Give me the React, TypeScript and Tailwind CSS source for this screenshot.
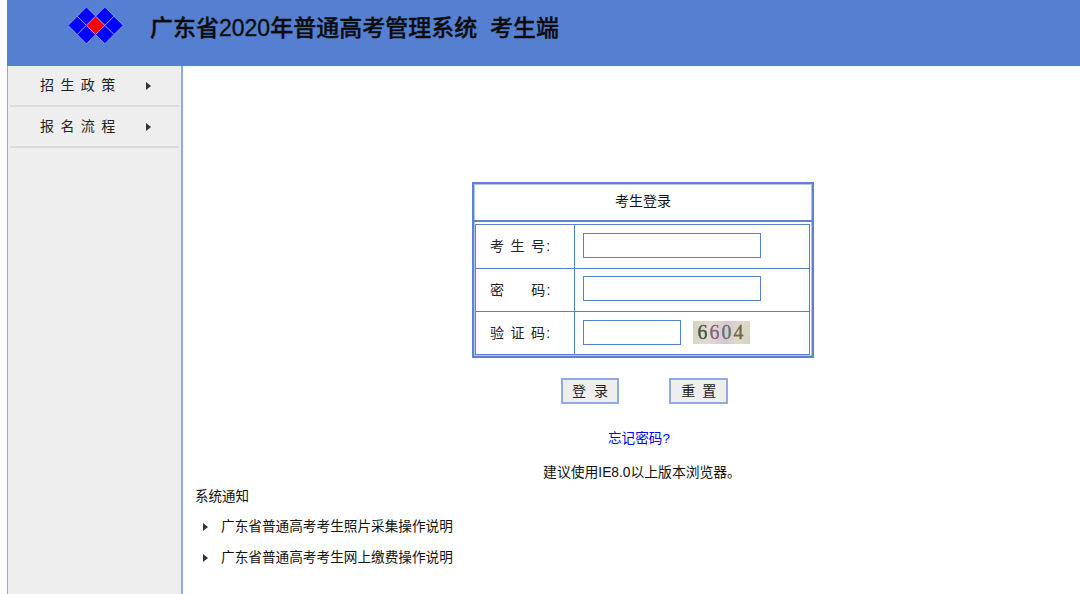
const font = { fontFamily: '"Liberation Sans", "Noto Sans CJK SC", sans-serif' };

function Logo() {
  // touching diamonds on a 9.2px grid, red one in the middle
  const cells = [
    [18.4, 9.2, "#0000ff"],
    [36.8, 9.2, "#0000ff"],
    [9.2, 18.4, "#0000ff"],
    [27.6, 18.4, "#ff0000"],
    [46, 18.4, "#0000ff"],
    [18.4, 27.6, "#0000ff"],
    [36.8, 27.6, "#0000ff"],
  ] as const;
  return (
    <svg width="56" height="38" viewBox="0 0 56 38" className="mt-[7px] shrink-0">
      {cells.map(([x, y, fill]) => (
        <polygon
          key={`${x}-${y}`}
          points={`${x},${y - 9.2} ${x + 9.2},${y} ${x},${y + 9.2} ${x - 9.2},${y}`}
          fill={fill}
          stroke="#9db4ee"
          strokeWidth="0.7"
        />
      ))}
    </svg>
  );
}

function Arrow({ className }: { className?: string }) {
  return (
    <svg width="5" height="8" viewBox="0 0 5 8" className={className}>
      <polygon points="0,0 5,4 0,8" fill="#333333" />
    </svg>
  );
}

function MenuItem({ label }: { label: string }) {
  return (
    <div className="ml-[2px] mr-[2px] flex h-[41px] items-center border-b-2 border-[#dcdcdc] pl-[30px] pr-[28px] text-[14px] tracking-[6.4px] text-[#222222]">
      <span className="flex-1">{label}</span>
      <Arrow />
    </div>
  );
}

function Captcha() {
  return (
    <div className="ml-[12px] flex h-[23px] w-[57px] items-center justify-center bg-[linear-gradient(100deg,#d6d2bf,#e4dccf_30%,#d6c6d4_58%,#e0dbc8_80%,#d5d2c0)] font-['Liberation_Serif',serif] text-[20px] leading-none tracking-[2px] blur-[0.4px] [-webkit-text-stroke:0.4px_currentColor]">
      <span className="text-[#3f5c49]">6</span>
      <span className="text-[#80647f]">6</span>
      <span className="text-[#5f756e]">0</span>
      <span className="text-[#726a46]">4</span>
    </div>
  );
}

function FormRow({ label, height, inset, last, children }: { label: string; height: string; inset: string; last?: boolean; children: React.ReactNode }) {
  return (
    <div className={`flex ${height} items-center ${last ? "" : "border-b border-[#5580d0]"}`}>
      <div className="flex h-full w-[99px] shrink-0 items-center whitespace-pre border-r border-[#5580d0] pl-[14px] text-[14px] tracking-[1.3px] text-[#222222]">
        {label}
      </div>
      <div className={`flex items-center pl-[8px] ${inset}`}>{children}</div>
    </div>
  );
}

function Field({ width }: { width: string }) {
  return <input className={`h-[25px] ${width} border border-[#5580d0] bg-white outline-none`} />;
}

export default function App() {
  return (
    <div className="flex h-[594px] w-[1080px] flex-col overflow-hidden bg-white pl-[7px] text-black" style={font}>
      <header className="flex h-[66px] shrink-0 items-start bg-[#5580d2] pl-[61px]">
        <Logo />
        <h1 className="ml-[26px] mt-[16px] text-[23px] font-medium leading-[24px] text-[#0c0c0c] [-webkit-text-stroke:0.35px_#0c0c0c]">
          广东省2020年普通高考管理系统&nbsp; 考生端
        </h1>
      </header>
      <div className="flex min-h-0 flex-1">
        <aside className="w-[176px] shrink-0 border-l border-r-2 border-l-[#8fabe2] border-r-[#8fabe2] bg-[#eeeeee]">
          <MenuItem label="招生政策" />
          <MenuItem label="报名流程" />
        </aside>
        <main className="flex-1 pt-[116px]">
          <div className="ml-[289px] w-[342px] border-2 border-[#5c82d4] shadow-[inset_0_0_0_1px_#b4c6ec]">
            <div className="flex h-[38px] items-center justify-center border-b-2 border-[#5c82d4] pb-px text-[14px] text-[#111111]">
              考生登录
            </div>
            <div className="mb-px ml-px mr-[2px] mt-[2px] border border-[#5c82d4]">
              <FormRow label="考 生 号:" height="h-[44px]" inset="pb-[2px]">
                <Field width="w-[178px]" />
              </FormRow>
              <FormRow label={"密     码:"} height="h-[43px]" inset="pb-[3px]">
                <Field width="w-[178px]" />
              </FormRow>
              <FormRow label="验 证 码:" height="h-[42px]" inset="pb-[2px]" last>
                <Field width="w-[98px]" />
                <Captcha />
              </FormRow>
            </div>
          </div>
          <div className="ml-[378px] mt-[20px] flex gap-[50px]">
            <button className="h-[26px] w-[58px] border-2 border-[#8fabe2] bg-[#eeeeee] pl-[2px] text-[14px] tracking-[2px] text-[#222222]">
              登 录
            </button>
            <button className="h-[26px] w-[59px] border-2 border-[#8fabe2] bg-[#eeeeee] pl-[2px] text-[14px] tracking-[1.6px] text-[#222222]">
              重 置
            </button>
          </div>
          <div className="ml-[199px] mt-[26px] w-[514px] text-center text-[13.6px] leading-[18px] text-[#0000ee]">忘记密码?</div>
          <div className="ml-[202px] mt-[16px] w-[514px] text-center text-[13.8px] leading-[18px] text-[#111111]">
            建议使用IE8.0以上版本浏览器。
          </div>
          <div className="ml-[12px] mt-[6px] text-[13.5px] leading-[18px] text-[#111111]">系统通知</div>
          <ul className="ml-[20px] mt-[12px] flex flex-col gap-[13px] text-[13.65px] leading-[18px] text-[#111111]">
            <li className="flex items-center gap-[13px]">
              <Arrow />
              广东省普通高考考生照片采集操作说明
            </li>
            <li className="flex items-center gap-[13px]">
              <Arrow />
              广东省普通高考考生网上缴费操作说明
            </li>
          </ul>
        </main>
      </div>
    </div>
  );
}
